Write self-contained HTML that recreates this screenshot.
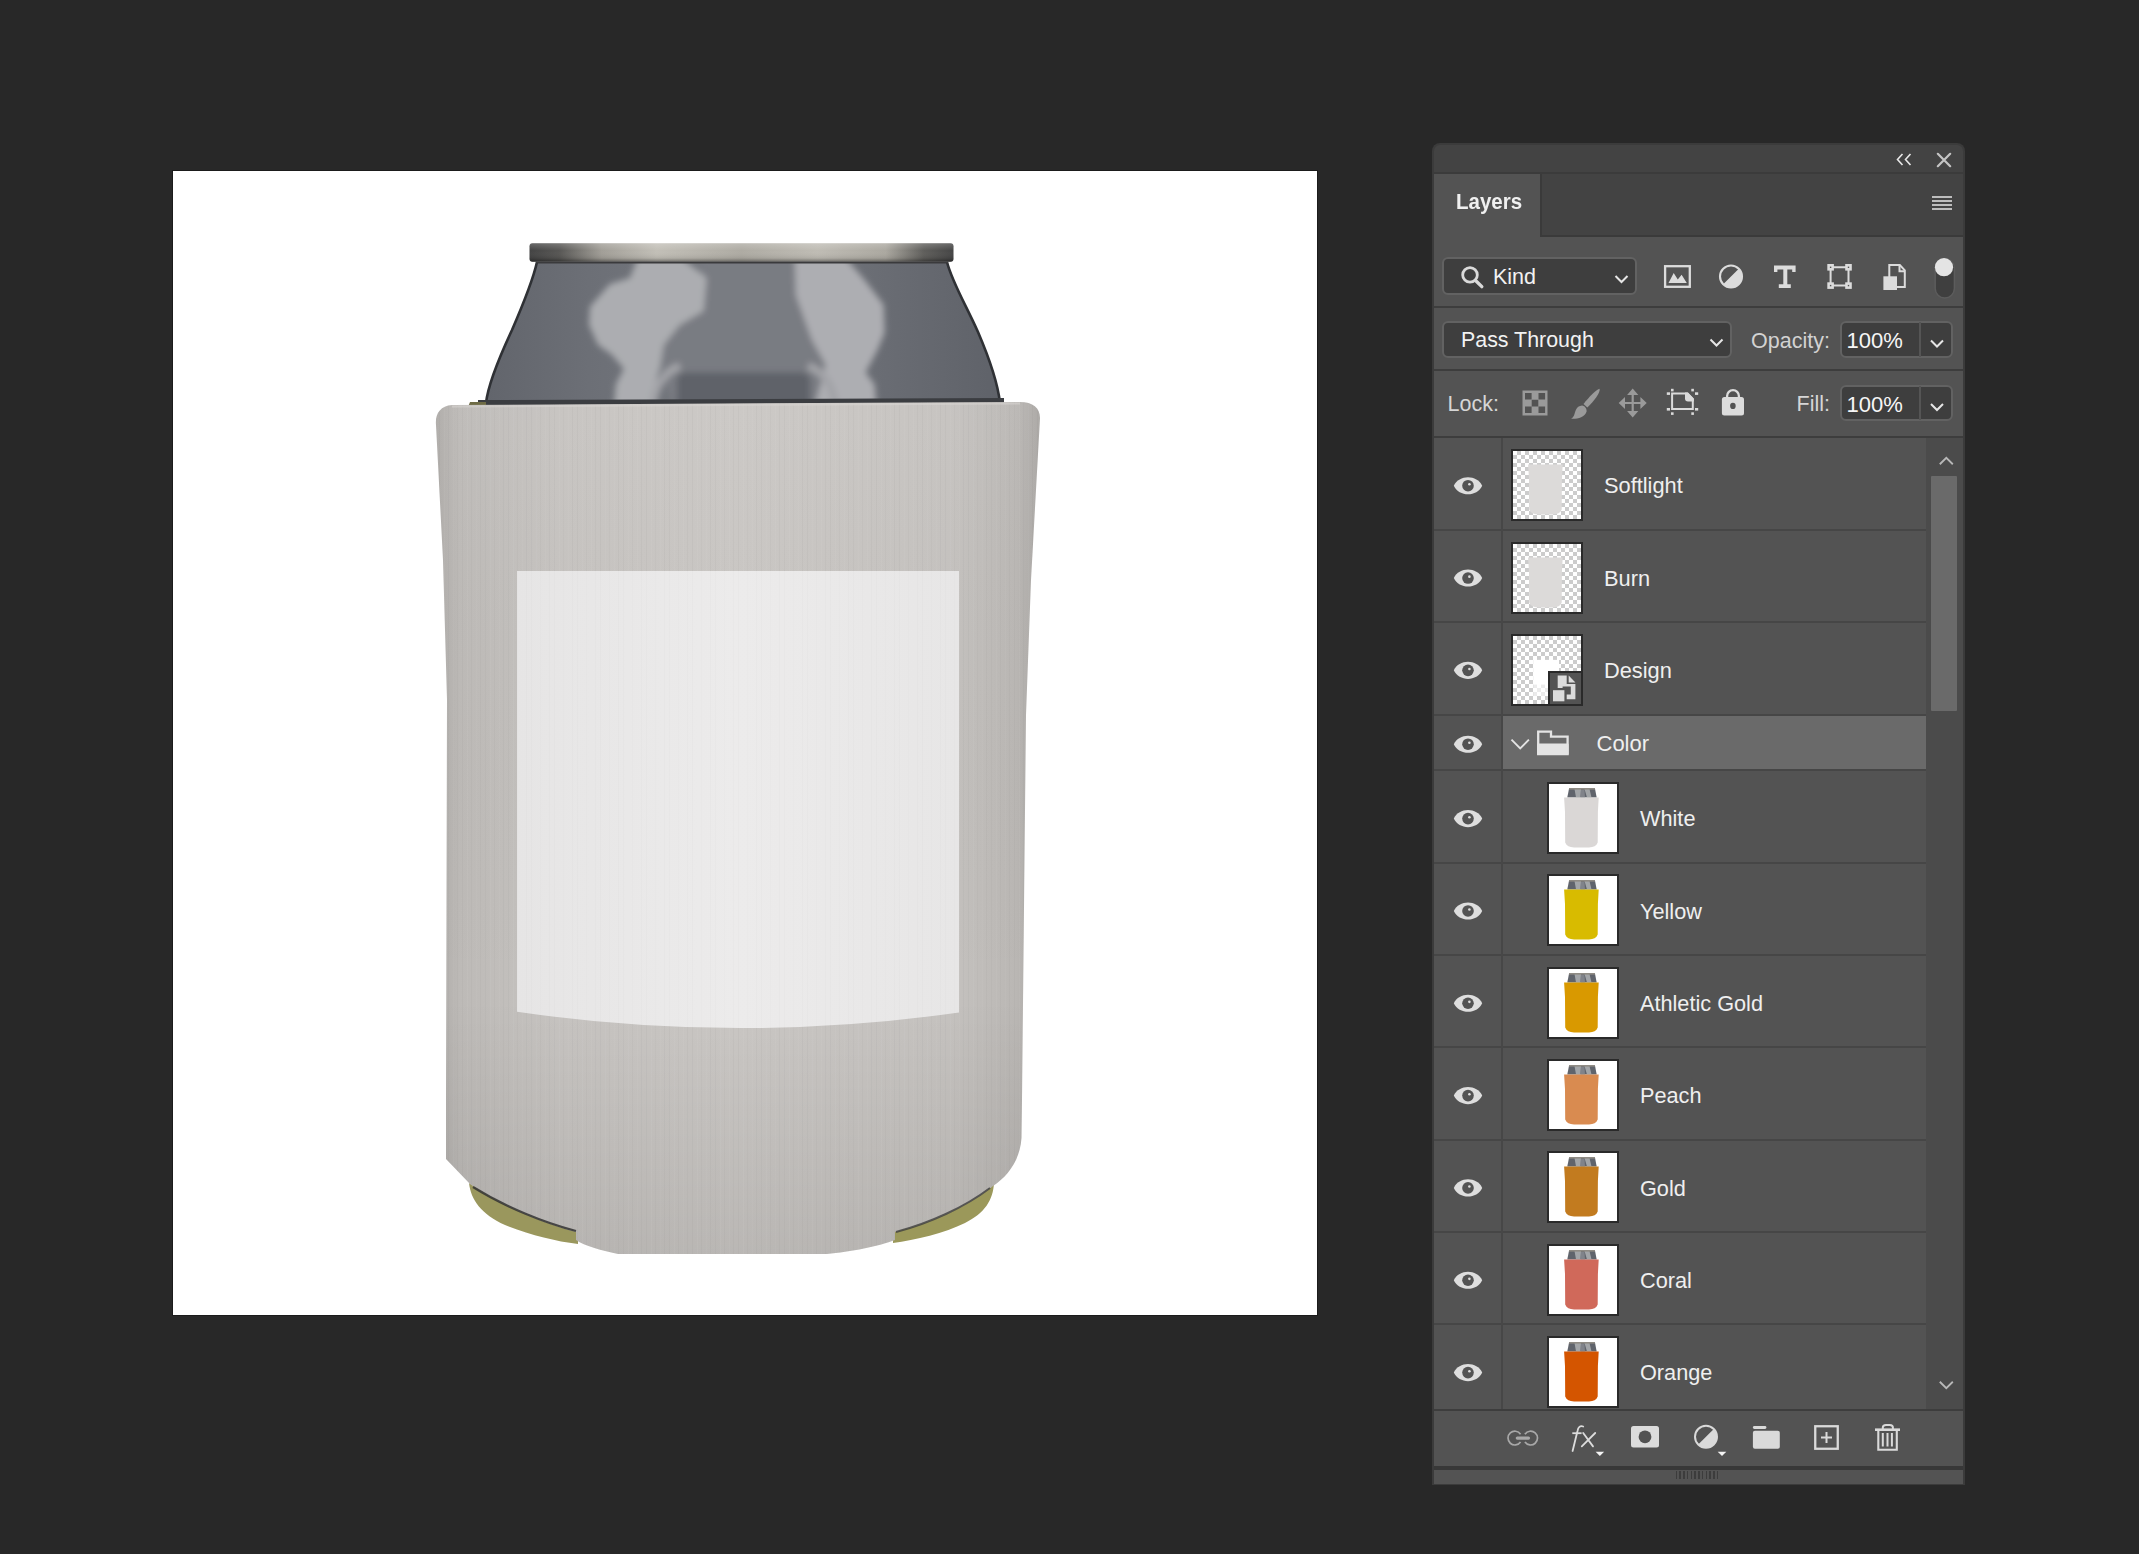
<!DOCTYPE html>
<html><head><meta charset="utf-8">
<style>
html,body{margin:0;padding:0;}
body{width:2139px;height:1554px;background:#282828;position:relative;overflow:hidden;font-family:"Liberation Sans",sans-serif;}
.a{position:absolute;}
.t{white-space:nowrap;line-height:1;}
.dd{background:#3e3e3e;border:2px solid #626262;border-radius:6px;box-sizing:border-box;}
.th{box-sizing:border-box;border:2px solid #2a2a2a;width:72px;height:72px;background:#fff;overflow:hidden;}
.ck{background:repeating-conic-gradient(#cccccc 0 25%,#ffffff 0 50%) 0 0/8px 8px;}
</style></head><body>
<div class="a" style="left:172px;top:170px;width:1146px;height:1146px;background:#1b1b1b;"></div>
<div class="a" style="left:173px;top:171px;width:1144px;height:1144px;background:#ffffff;"></div>
<svg class="a" style="left:0;top:0" width="2139" height="1554" viewBox="0 0 2139 1554">
<defs>
<linearGradient id="rim" x1="0" x2="1" y1="0" y2="0">
<stop offset="0" stop-color="#434343"/><stop offset="0.07" stop-color="#575654"/><stop offset="0.17" stop-color="#a19e97"/><stop offset="0.3" stop-color="#c2bfb7"/>
<stop offset="0.5" stop-color="#aeaba3"/><stop offset="0.68" stop-color="#bfbcb4"/><stop offset="0.84" stop-color="#aba8a0"/><stop offset="0.93" stop-color="#5f5e5b"/><stop offset="1" stop-color="#454545"/>
</linearGradient>
<linearGradient id="rimv" x1="0" x2="0" y1="0" y2="1">
<stop offset="0" stop-color="#fff" stop-opacity="0.2"/><stop offset="0.4" stop-color="#fff" stop-opacity="0"/><stop offset="0.8" stop-color="#000" stop-opacity="0.08"/><stop offset="1" stop-color="#000" stop-opacity="0.4"/>
</linearGradient>
<linearGradient id="canbase" x1="0" x2="1" y1="0" y2="0">
<stop offset="0" stop-color="#62656c"/><stop offset="0.2" stop-color="#6c6f76"/><stop offset="0.5" stop-color="#777a80"/><stop offset="0.8" stop-color="#686b72"/><stop offset="1" stop-color="#5f6269"/>
</linearGradient>
<linearGradient id="body" x1="0" x2="1" y1="0" y2="0">
<stop offset="0" stop-color="#aeaba8"/><stop offset="0.04" stop-color="#bdbab7"/><stop offset="0.2" stop-color="#c6c3c0"/><stop offset="0.5" stop-color="#cac7c4"/>
<stop offset="0.85" stop-color="#c5c2bf"/><stop offset="0.96" stop-color="#bab7b4"/><stop offset="1" stop-color="#aaa7a4"/>
</linearGradient>
<linearGradient id="bodyv" x1="0" x2="0" y1="0" y2="1">
<stop offset="0" stop-color="#fff" stop-opacity="0.04"/><stop offset="0.7" stop-color="#000" stop-opacity="0"/><stop offset="1" stop-color="#000" stop-opacity="0.08"/>
</linearGradient>
<linearGradient id="lab" x1="0" x2="1" y1="0" y2="0">
<stop offset="0" stop-color="#e6e5e5"/><stop offset="0.5" stop-color="#ecebeb"/><stop offset="1" stop-color="#e7e6e6"/>
</linearGradient>
<pattern id="stri" width="23" height="40" patternUnits="userSpaceOnUse">
<rect x="2" y="0" width="1" height="40" fill="#000" opacity="0.025"/><rect x="7" y="0" width="1" height="40" fill="#fff" opacity="0.04"/>
<rect x="11" y="0" width="1" height="40" fill="#000" opacity="0.02"/><rect x="16" y="0" width="1" height="40" fill="#fff" opacity="0.03"/><rect x="20" y="0" width="1" height="40" fill="#000" opacity="0.025"/>
</pattern>
<filter id="blur3"><feGaussianBlur stdDeviation="3"/></filter>
<filter id="blur1" x="-5%" y="-5%" width="110%" height="110%"><feGaussianBlur stdDeviation="3.2"/></filter>
<clipPath id="canclip"><path d="M537 262 C533 280 525 300 512 330 C498 360 488 385 486 403 L1000 403 C998 385 990 360 978 332 C966 305 952 282 947 262 Z"/></clipPath>
</defs>
<!-- can shoulder -->
<path d="M537 262 C533 280 525 300 512 330 C498 360 488 385 486 403 L1000 403 C998 385 990 360 978 332 C966 305 952 282 947 262 Z" fill="url(#canbase)"/>
<g clip-path="url(#canclip)">
<g filter="url(#blur1)">
<path d="M700 258 L795 258 L800 300 L812 340 L826 365 L814 410 L676 410 L660 369 L664 345 L680 325 L704 311 Z" fill="#797c82"/>
<path d="M637.8 258 L681.6 258 L706.6 278 L703.6 311 L679.6 325 L663.7 345 L659.7 369 L647.7 410 L613.8 410 L615.8 384.6 L623.8 368.7 L611.8 354.7 L597.9 344.7 L588.9 324.8 L589.9 306.8 L609.9 283.9 L629.8 277.9 Z" fill="#acadb1"/>
<path d="M794.8 258 L845.7 258 L864.6 280 L883.6 304.8 L884.6 332.8 L877.6 349.7 L865.6 372.6 L874.6 384.6 L876.6 410 L813.8 410 L825.7 364.7 L811.8 339.7 L795.8 294.9 Z" fill="#adaeb2"/>
<path d="M652 410 C654 390 662 372 680 366" fill="none" stroke="#a2a3a7" stroke-width="8"/>
<path d="M836 410 C834 390 826 372 808 366" fill="none" stroke="#a2a3a7" stroke-width="8"/>
<rect x="677" y="372.5" width="133" height="40" rx="8" fill="#5f6269"/>
</g>
</g>
<path d="M537 262 C533 280 525 300 512 330 C498 360 488 385 486 403" fill="none" stroke="#2f3135" stroke-width="2.6"/>
<path d="M947 262 C952 282 966 305 978 332 C990 360 998 385 1000 403" fill="none" stroke="#2f3135" stroke-width="2.6"/>
<!-- rim -->
<rect x="529.5" y="243.3" width="424" height="18.5" rx="3" fill="url(#rim)"/>
<rect x="529.5" y="243.3" width="424" height="18.5" rx="3" fill="url(#rimv)"/>
<path d="M536 262.5 H948" stroke="#3a3a3c" stroke-width="2"/>
<!-- dark gap under koozie top -->
<path d="M478 400 L1004 398 L1004 408 L478 410 Z" fill="#3b3d41"/>
<path d="M470 402 L486 402 L486 410 L466 412 Z" fill="#6e6b45"/>
<!-- olive bottoms -->
<path d="M469 1183 C471 1200 481 1214 505 1225 C530 1235 555 1241 578 1244 L578 1228 C545 1221 505 1205 469 1183 Z" fill="#9a975d"/>
<path d="M994 1183 C993 1200 985 1213 965 1223 C945 1233 915 1240 893 1243 L893 1228 C930 1220 965 1205 994 1183 Z" fill="#9b985a"/>
<!-- koozie body -->
<path id="kbody" d="M436 425 C435 414 440 406 452 405 L1020 402 C1033 402 1040 408 1040 418 L1031 580 L1026 715 L1022 1100 L1021.5 1138 C1020 1160 1008 1176 993 1186 C970 1205 935 1222 895 1232 L895 1240 C880 1246 850 1252 827 1254 L618 1254 C600 1250 585 1246 576 1240 L576 1232 C540 1222 500 1205 470 1184 L446 1159 L446 1100 L447 700 L443 560 Z" fill="url(#body)"/>
<path d="M436 425 C435 414 440 406 452 405 L1020 402 C1033 402 1040 408 1040 418 L1031 580 L1026 715 L1022 1100 L1021.5 1138 C1020 1160 1008 1176 993 1186 C970 1205 935 1222 895 1232 L895 1240 C880 1246 850 1252 827 1254 L618 1254 C600 1250 585 1246 576 1240 L576 1232 C540 1222 500 1205 470 1184 L446 1159 L446 1100 L447 700 L443 560 Z" fill="url(#bodyv)"/>
<path d="M436 425 C435 414 440 406 452 405 L1020 402 C1033 402 1040 408 1040 418 L1031 580 L1026 715 L1022 1100 L1021.5 1138 C1020 1160 1008 1176 993 1186 C970 1205 935 1222 895 1232 L895 1240 C880 1246 850 1252 827 1254 L618 1254 C600 1250 585 1246 576 1240 L576 1232 C540 1222 500 1205 470 1184 L446 1159 L446 1100 L447 700 L443 560 Z" fill="url(#stri)"/>
<path d="M452 406.5 L1020 403.5" stroke="#d8d5d2" stroke-width="2" opacity="0.6"/>
<path d="M473 1187 C505 1207 545 1223 576 1231" fill="none" stroke="#333" stroke-width="2.2" opacity="0.85"/>
<path d="M990 1188 C965 1207 930 1223 896 1232" fill="none" stroke="#3d3d3d" stroke-width="2" opacity="0.8"/>
<!-- label -->
<path d="M517 571 H959 V1012.5 Q738 1044 517 1011.8 Z" fill="url(#lab)"/>
<path d="M517 571 H959 V1012.5 Q738 1044 517 1011.8 Z" fill="url(#stri)" opacity="0.5"/>
</svg>
<div class="a" style="left:1432px;top:143px;width:533px;height:1342px;background:#3b3b3b;border-radius:8px 8px 0 0;"></div>
<div class="a" style="left:1434px;top:145px;width:529px;height:27px;background:#434343;border-radius:6px 6px 0 0;"></div>
<div class="a" style="left:1434px;top:174px;width:529px;height:63px;background:#434343;"></div>
<div class="a" style="left:1434px;top:174px;width:106px;height:63px;background:#535353;"></div>
<div class="a" style="left:1540px;top:174px;width:2px;height:63px;background:#3a3a3a;"></div>
<div class="a" style="left:1540px;top:235px;width:423px;height:2px;background:#3a3a3a;"></div>
<div class="a" style="left:1434px;top:237px;width:529px;height:1229px;background:#535353;"></div>
<div class="a" style="left:1434px;top:306px;width:529px;height:2px;background:#3d3d3d;"></div>
<div class="a" style="left:1434px;top:369px;width:529px;height:2px;background:#3d3d3d;"></div>
<div class="a" style="left:1434px;top:436px;width:529px;height:2px;background:#3d3d3d;"></div>
<div class="a" style="left:1926px;top:438px;width:37px;height:972px;background:#4b4b4b;"></div>
<div class="a" style="left:1434px;top:1409px;width:529px;height:2px;background:#3d3d3d;"></div>
<div class="a" style="left:1434px;top:1466px;width:529px;height:4px;background:#383838;"></div>
<div class="a" style="left:1434px;top:1470px;width:529px;height:14px;background:#535353;"></div>
<svg class="a" style="left:0;top:0" width="2139" height="1554" viewBox="0 0 2139 1554">
<path d="M1902.5 154 L1897.5 159.5 L1902.5 165 M1910.5 154 L1905.5 159.5 L1910.5 165" fill="none" stroke="#e8e8e8" stroke-width="1.6"/>
<path d="M1937.8 153.8 L1950.2 166.2 M1950.2 153.8 L1937.8 166.2" fill="none" stroke="#c4c4c4" stroke-width="2.2" stroke-linecap="round"/>
</svg>
<div class="a" style="left:1932px;top:196px;width:20px;height:2.2px;background:#bdbdbd;"></div>
<div class="a" style="left:1932px;top:200px;width:20px;height:2.2px;background:#bdbdbd;"></div>
<div class="a" style="left:1932px;top:204px;width:20px;height:2.2px;background:#bdbdbd;"></div>
<div class="a" style="left:1932px;top:208px;width:20px;height:2.2px;background:#bdbdbd;"></div>
<div class="a t" style="left:1455.5px;top:190.9px;font-size:22.3px;color:#f0f0f0;font-weight:bold;transform:scaleX(0.92);transform-origin:0 0;">Layers</div>
<div class="a dd" style="left:1442px;top:257px;width:195px;height:38px;"></div>
<svg class="a" style="left:0;top:0" width="2139" height="1554" viewBox="0 0 2139 1554">
<circle cx="1470" cy="274.9" r="7.3" fill="none" stroke="#dadada" stroke-width="2.8"/>
<path d="M1475.8 280.8 L1481.8 286.6" stroke="#dadada" stroke-width="3.4" stroke-linecap="round"/>
<rect x="1665.1" y="266.2" width="24.7" height="20.6" fill="none" stroke="#dcdcdc" stroke-width="2.3"/>
<path d="M1668.5 283 L1673.7 273 L1677.8 279.5 L1681.6 274.8 L1686.8 283 Z" fill="#dcdcdc"/>
<circle cx="1731" cy="276.5" r="11" fill="none" stroke="#dcdcdc" stroke-width="2.1"/>
<path d="M1738.8 268.7 A11 11 0 0 1 1723.2 284.3 Z" fill="#dcdcdc"/>
<path d="M1774 265.5 H1795.6 V272 H1792.2 V269.6 H1787.3 V284.2 H1790.8 V287.9 H1778.8 V284.2 H1783.3 V269.6 H1777.4 V272 H1774 Z" fill="#dcdcdc"/>
<path d="M1830.6 267.3 H1848.5 M1830.6 285.6 H1848.5 M1830.6 267.3 V285.6 M1848.5 267.3 V285.6" fill="none" stroke="#dcdcdc" stroke-width="2"/>
<rect x="1827.3" y="264" width="6.6" height="6.6" fill="#dcdcdc"/><rect x="1845.2" y="264" width="6.6" height="6.6" fill="#dcdcdc"/>
<rect x="1827.3" y="282.3" width="6.6" height="6.6" fill="#dcdcdc"/><rect x="1845.2" y="282.3" width="6.6" height="6.6" fill="#dcdcdc"/>
<rect x="1829.9" y="266.6" width="1.4" height="1.4" fill="#535353"/><rect x="1847.8" y="266.6" width="1.4" height="1.4" fill="#535353"/>
<rect x="1829.9" y="284.9" width="1.4" height="1.4" fill="#535353"/><rect x="1847.8" y="284.9" width="1.4" height="1.4" fill="#535353"/>
<path d="M1889.3 277 V265 H1899.8 L1904.8 270.3 V286.9 H1896" fill="none" stroke="#dcdcdc" stroke-width="2"/>
<path d="M1899.5 265 V271.2 H1905" fill="none" stroke="#dcdcdc" stroke-width="2"/>
<rect x="1883.4" y="276.3" width="13.6" height="13.7" fill="#dcdcdc"/>
<rect x="1935.2" y="258.5" width="19.2" height="39.5" rx="9.6" fill="#3f3f3f" stroke="#5c5c5c" stroke-width="1.5"/>
<circle cx="1944" cy="267.2" r="9.1" fill="#e4e4e4"/>
</svg>
<div class="a t" style="left:1493.0px;top:267.4px;font-size:21.5px;color:#f2f2f2;font-weight:normal;">Kind</div>
<div class="a dd" style="left:1442px;top:321px;width:290px;height:37px;"></div>
<div class="a t" style="left:1461.0px;top:330.1px;font-size:21.4px;color:#f2f2f2;font-weight:normal;">Pass Through</div>
<div class="a t" style="left:1751.0px;top:330.5px;font-size:21.5px;color:#d2d2d2;font-weight:normal;">Opacity:</div>
<div class="a dd" style="left:1840px;top:321px;width:113px;height:37px;"></div>
<div class="a" style="left:1919px;top:322px;width:2px;height:35px;background:#555555;"></div>
<div class="a t" style="left:1846.5px;top:330.1px;font-size:22px;color:#f6f6f6;font-weight:normal;">100%</div>
<div class="a t" style="left:1447.5px;top:394.0px;font-size:21.5px;color:#d6d6d6;font-weight:normal;">Lock:</div>
<div class="a t" style="left:1796.5px;top:394.0px;font-size:21.5px;color:#d6d6d6;font-weight:normal;">Fill:</div>
<div class="a dd" style="left:1840px;top:385px;width:113px;height:36px;"></div>
<div class="a" style="left:1919px;top:386px;width:2px;height:34px;background:#555555;"></div>
<div class="a t" style="left:1846.5px;top:393.6px;font-size:22px;color:#f6f6f6;font-weight:normal;">100%</div>
<svg class="a" style="left:0;top:0" width="2139" height="1554" viewBox="0 0 2139 1554">
<rect x="1522.5" y="390.5" width="25" height="25" fill="#9a9a9a"/>
<path d="M1525 393 h6.6 v6.6 h-6.6z M1538.5 393 h6.6 v6.6 h-6.6z M1531.7 399.8 h6.6 v6.6 h-6.6z M1525 406.5 h6.6 v6.6 h-6.6z M1538.5 406.5 h6.6 v6.6 h-6.6z" fill="#535353"/>
<path d="M1599.6 388.8 C1597 389 1589 397 1583.5 404 L1587.3 407.6 C1594 401 1600.5 393 1599.6 388.8 Z" fill="#9a9a9a"/>
<path d="M1582 405.5 C1576.5 406 1575.5 411 1574.5 414 C1573.8 416.5 1572.5 418.2 1570.8 418.8 C1577 419.2 1584.5 418 1586.6 411.5 C1587 409 1585 405.8 1582 405.5 Z" fill="#9a9a9a"/>
<path d="M1632.7 388.6 L1627.1 395 H1631.6 V401.9 H1625 V397 L1618.7 403 L1625 409 V404.1 H1631.6 V411 H1627.1 L1632.7 417.4 L1638.3 411 H1633.8 V404.1 H1640.4 V409 L1646.7 403 L1640.4 397 V401.9 H1633.8 V395 H1638.3 Z" fill="#9a9a9a"/>
<path d="M1672.1 393.6 H1687.3 L1692.8 399.1 V409.1 H1672.1 Z" fill="none" stroke="#dadada" stroke-width="2"/>
<path d="M1685 392.6 H1688 L1693.8 398.4 V401.4 H1688 C1686 401.4 1685 400.4 1685 398.4 Z" fill="#dadada"/>
<rect x="1671" y="388.8" width="2.6" height="2.6" fill="#dadada"/><rect x="1691.3" y="388.8" width="2.6" height="2.6" fill="#dadada"/>
<rect x="1671" y="412.3" width="2.6" height="2.6" fill="#dadada"/><rect x="1691.3" y="412.3" width="2.6" height="2.6" fill="#dadada"/>
<rect x="1666.8" y="392.3" width="3.2" height="2.6" fill="#dadada"/><rect x="1695" y="392.3" width="3.2" height="2.6" fill="#dadada"/>
<rect x="1666.8" y="408" width="3.2" height="2.6" fill="#dadada"/><rect x="1695" y="408" width="3.2" height="2.6" fill="#dadada"/>
<path d="M1727.1 398 V396 A5.9 5.9 0 0 1 1738.9 396 V398" fill="none" stroke="#dcdcdc" stroke-width="2.3"/>
<rect x="1721.9" y="397" width="22.1" height="18.5" rx="2.5" fill="#dcdcdc"/>
<ellipse cx="1732.9" cy="405.9" rx="2.8" ry="3.1" fill="#535353"/>
</svg>
<svg class="a" style="left:0;top:0" width="2139" height="1554" viewBox="0 0 2139 1554"><path d="M1615.5 276.0 L1621.5 282.0 L1627.5 276.0" fill="none" stroke="#e6e6e6" stroke-width="2"/><path d="M1710.5 339.5 L1716.5 345.5 L1722.5 339.5" fill="none" stroke="#e6e6e6" stroke-width="2"/><path d="M1931.0 340.5 L1937 346.5 L1943.0 340.5" fill="none" stroke="#e6e6e6" stroke-width="2"/><path d="M1931.0 404.0 L1937 410.0 L1943.0 404.0" fill="none" stroke="#e6e6e6" stroke-width="2"/></svg>
<div class="a" style="left:1434px;top:528.90px;width:492px;height:2px;background:#464646"></div>
<div class="a" style="left:1434px;top:621.23px;width:492px;height:2px;background:#464646"></div>
<div class="a" style="left:1434px;top:713.56px;width:492px;height:2px;background:#464646"></div>
<div class="a" style="left:1434px;top:768.90px;width:492px;height:2px;background:#464646"></div>
<div class="a" style="left:1434px;top:861.80px;width:492px;height:2px;background:#464646"></div>
<div class="a" style="left:1434px;top:954.13px;width:492px;height:2px;background:#464646"></div>
<div class="a" style="left:1434px;top:1046.46px;width:492px;height:2px;background:#464646"></div>
<div class="a" style="left:1434px;top:1138.79px;width:492px;height:2px;background:#464646"></div>
<div class="a" style="left:1434px;top:1231.12px;width:492px;height:2px;background:#464646"></div>
<div class="a" style="left:1434px;top:1323.45px;width:492px;height:2px;background:#464646"></div>
<div class="a" style="left:1501px;top:438px;width:2px;height:971px;background:#474747;"></div>
<div class="a" style="left:1503px;top:715.9px;width:423px;height:53px;background:#6a6a6a;"></div>
<svg class="a" style="left:0;top:0" width="2139" height="1554" viewBox="0 0 2139 1554"><path d="M1453.8 485.7 C1459 474.3 1477 474.3 1482.2 485.7 C1477 497.09999999999997 1459 497.09999999999997 1453.8 485.7 Z" fill="#dedede"/><circle cx="1468" cy="485.70" r="5.8" fill="#535353"/><circle cx="1469.4" cy="484.30" r="1.3" fill="#dedede"/><path d="M1453.8 578.03 C1459 566.63 1477 566.63 1482.2 578.03 C1477 589.43 1459 589.43 1453.8 578.03 Z" fill="#dedede"/><circle cx="1468" cy="578.03" r="5.8" fill="#535353"/><circle cx="1469.4" cy="576.63" r="1.3" fill="#dedede"/><path d="M1453.8 670.36 C1459 658.96 1477 658.96 1482.2 670.36 C1477 681.76 1459 681.76 1453.8 670.36 Z" fill="#dedede"/><circle cx="1468" cy="670.36" r="5.8" fill="#535353"/><circle cx="1469.4" cy="668.96" r="1.3" fill="#dedede"/><path d="M1453.8 744.2 C1459 732.8000000000001 1477 732.8000000000001 1482.2 744.2 C1477 755.6 1459 755.6 1453.8 744.2 Z" fill="#dedede"/><circle cx="1468" cy="744.20" r="5.8" fill="#535353"/><circle cx="1469.4" cy="742.80" r="1.3" fill="#dedede"/><path d="M1453.8 818.6 C1459 807.2 1477 807.2 1482.2 818.6 C1477 830.0 1459 830.0 1453.8 818.6 Z" fill="#dedede"/><circle cx="1468" cy="818.60" r="5.8" fill="#535353"/><circle cx="1469.4" cy="817.20" r="1.3" fill="#dedede"/><path d="M1453.8 910.9300000000001 C1459 899.5300000000001 1477 899.5300000000001 1482.2 910.9300000000001 C1477 922.33 1459 922.33 1453.8 910.9300000000001 Z" fill="#dedede"/><circle cx="1468" cy="910.93" r="5.8" fill="#535353"/><circle cx="1469.4" cy="909.53" r="1.3" fill="#dedede"/><path d="M1453.8 1003.26 C1459 991.86 1477 991.86 1482.2 1003.26 C1477 1014.66 1459 1014.66 1453.8 1003.26 Z" fill="#dedede"/><circle cx="1468" cy="1003.26" r="5.8" fill="#535353"/><circle cx="1469.4" cy="1001.86" r="1.3" fill="#dedede"/><path d="M1453.8 1095.5900000000001 C1459 1084.19 1477 1084.19 1482.2 1095.5900000000001 C1477 1106.9900000000002 1459 1106.9900000000002 1453.8 1095.5900000000001 Z" fill="#dedede"/><circle cx="1468" cy="1095.59" r="5.8" fill="#535353"/><circle cx="1469.4" cy="1094.19" r="1.3" fill="#dedede"/><path d="M1453.8 1187.92 C1459 1176.52 1477 1176.52 1482.2 1187.92 C1477 1199.3200000000002 1459 1199.3200000000002 1453.8 1187.92 Z" fill="#dedede"/><circle cx="1468" cy="1187.92" r="5.8" fill="#535353"/><circle cx="1469.4" cy="1186.52" r="1.3" fill="#dedede"/><path d="M1453.8 1280.25 C1459 1268.85 1477 1268.85 1482.2 1280.25 C1477 1291.65 1459 1291.65 1453.8 1280.25 Z" fill="#dedede"/><circle cx="1468" cy="1280.25" r="5.8" fill="#535353"/><circle cx="1469.4" cy="1278.85" r="1.3" fill="#dedede"/><path d="M1453.8 1372.58 C1459 1361.1799999999998 1477 1361.1799999999998 1482.2 1372.58 C1477 1383.98 1459 1383.98 1453.8 1372.58 Z" fill="#dedede"/><circle cx="1468" cy="1372.58" r="5.8" fill="#535353"/><circle cx="1469.4" cy="1371.18" r="1.3" fill="#dedede"/></svg>
<div class="a t" style="left:1604.0px;top:475.2px;font-size:21.8px;color:#efefef;font-weight:normal;">Softlight</div>
<div class="a t" style="left:1604.0px;top:567.6px;font-size:21.8px;color:#efefef;font-weight:normal;">Burn</div>
<div class="a t" style="left:1604.0px;top:659.9px;font-size:21.8px;color:#efefef;font-weight:normal;">Design</div>
<div class="a t" style="left:1596.5px;top:733.1px;font-size:22px;color:#efefef;font-weight:normal;">Color</div>
<div class="a t" style="left:1640.0px;top:808.1px;font-size:21.7px;color:#efefef;font-weight:normal;">White</div>
<div class="a t" style="left:1640.0px;top:900.5px;font-size:21.7px;color:#efefef;font-weight:normal;">Yellow</div>
<div class="a t" style="left:1640.0px;top:992.8px;font-size:21.7px;color:#efefef;font-weight:normal;">Athletic Gold</div>
<div class="a t" style="left:1640.0px;top:1085.1px;font-size:21.7px;color:#efefef;font-weight:normal;">Peach</div>
<div class="a t" style="left:1640.0px;top:1177.5px;font-size:21.7px;color:#efefef;font-weight:normal;">Gold</div>
<div class="a t" style="left:1640.0px;top:1269.8px;font-size:21.7px;color:#efefef;font-weight:normal;">Coral</div>
<div class="a t" style="left:1640.0px;top:1362.1px;font-size:21.7px;color:#efefef;font-weight:normal;">Orange</div>
<svg class="a" style="left:0;top:0" width="2139" height="1554" viewBox="0 0 2139 1554">
<path d="M1511.5 739.6 L1520.2 748.4 L1528.9 739.6" fill="none" stroke="#e4e4e4" stroke-width="1.9"/>
<path d="M1538.2 754 V731.6 H1551 V736.6 H1567.6 V754 Z" fill="none" stroke="#e4e4e4" stroke-width="2.3"/>
<rect x="1537" y="743.5" width="31.6" height="11.3" rx="1.2" fill="#e4e4e4"/>
</svg>
<div class="a th" style="left:1547px;top:782.10px;"><svg width="68" height="68" viewBox="0 0 68 68" style="display:block"><defs><linearGradient id="cg" x1="0" x2="1"><stop offset="0" stop-color="#5a5f67"/><stop offset="0.45" stop-color="#a7a9ad"/><stop offset="0.55" stop-color="#9c9ea3"/><stop offset="1" stop-color="#5a5f67"/></linearGradient></defs><path d="M20.1 4.3 H45.9 L47.7 13.4 H18.3 Z" fill="#60646c"/><path d="M25.5 5 L32 5 L31.5 13.4 L27 13.4 Z M35.5 5 L40.5 5 L42.5 13.4 L38 13.4 Z" fill="#aeb0b3" opacity="0.85"/><path d="M32 6 L35.5 6 L36 13.4 L31.5 13.4 Z" fill="#80838a"/><rect x="20" y="4" width="26" height="1.6" fill="#8f8b84"/><path d="M15.1 13.4 L49.7 13.4 L48.9 28 L48.7 58.6 C47.5 62 44.5 63.5 40 63.5 L25 63.5 C20.5 63.5 17.5 62 16.2 58.6 L16 28 Z" fill="#dad7d6"/></svg></div>
<div class="a th" style="left:1547px;top:874.43px;"><svg width="68" height="68" viewBox="0 0 68 68" style="display:block"><defs><linearGradient id="cg" x1="0" x2="1"><stop offset="0" stop-color="#5a5f67"/><stop offset="0.45" stop-color="#a7a9ad"/><stop offset="0.55" stop-color="#9c9ea3"/><stop offset="1" stop-color="#5a5f67"/></linearGradient></defs><path d="M20.1 4.3 H45.9 L47.7 13.4 H18.3 Z" fill="#60646c"/><path d="M25.5 5 L32 5 L31.5 13.4 L27 13.4 Z M35.5 5 L40.5 5 L42.5 13.4 L38 13.4 Z" fill="#aeb0b3" opacity="0.85"/><path d="M32 6 L35.5 6 L36 13.4 L31.5 13.4 Z" fill="#80838a"/><rect x="20" y="4" width="26" height="1.6" fill="#8f8b84"/><path d="M15.1 13.4 L49.7 13.4 L48.9 28 L48.7 58.6 C47.5 62 44.5 63.5 40 63.5 L25 63.5 C20.5 63.5 17.5 62 16.2 58.6 L16 28 Z" fill="#d8bb00"/></svg></div>
<div class="a th" style="left:1547px;top:966.76px;"><svg width="68" height="68" viewBox="0 0 68 68" style="display:block"><defs><linearGradient id="cg" x1="0" x2="1"><stop offset="0" stop-color="#5a5f67"/><stop offset="0.45" stop-color="#a7a9ad"/><stop offset="0.55" stop-color="#9c9ea3"/><stop offset="1" stop-color="#5a5f67"/></linearGradient></defs><path d="M20.1 4.3 H45.9 L47.7 13.4 H18.3 Z" fill="#60646c"/><path d="M25.5 5 L32 5 L31.5 13.4 L27 13.4 Z M35.5 5 L40.5 5 L42.5 13.4 L38 13.4 Z" fill="#aeb0b3" opacity="0.85"/><path d="M32 6 L35.5 6 L36 13.4 L31.5 13.4 Z" fill="#80838a"/><rect x="20" y="4" width="26" height="1.6" fill="#8f8b84"/><path d="M15.1 13.4 L49.7 13.4 L48.9 28 L48.7 58.6 C47.5 62 44.5 63.5 40 63.5 L25 63.5 C20.5 63.5 17.5 62 16.2 58.6 L16 28 Z" fill="#d99900"/></svg></div>
<div class="a th" style="left:1547px;top:1059.09px;"><svg width="68" height="68" viewBox="0 0 68 68" style="display:block"><defs><linearGradient id="cg" x1="0" x2="1"><stop offset="0" stop-color="#5a5f67"/><stop offset="0.45" stop-color="#a7a9ad"/><stop offset="0.55" stop-color="#9c9ea3"/><stop offset="1" stop-color="#5a5f67"/></linearGradient></defs><path d="M20.1 4.3 H45.9 L47.7 13.4 H18.3 Z" fill="#60646c"/><path d="M25.5 5 L32 5 L31.5 13.4 L27 13.4 Z M35.5 5 L40.5 5 L42.5 13.4 L38 13.4 Z" fill="#aeb0b3" opacity="0.85"/><path d="M32 6 L35.5 6 L36 13.4 L31.5 13.4 Z" fill="#80838a"/><rect x="20" y="4" width="26" height="1.6" fill="#8f8b84"/><path d="M15.1 13.4 L49.7 13.4 L48.9 28 L48.7 58.6 C47.5 62 44.5 63.5 40 63.5 L25 63.5 C20.5 63.5 17.5 62 16.2 58.6 L16 28 Z" fill="#d98b50"/></svg></div>
<div class="a th" style="left:1547px;top:1151.42px;"><svg width="68" height="68" viewBox="0 0 68 68" style="display:block"><defs><linearGradient id="cg" x1="0" x2="1"><stop offset="0" stop-color="#5a5f67"/><stop offset="0.45" stop-color="#a7a9ad"/><stop offset="0.55" stop-color="#9c9ea3"/><stop offset="1" stop-color="#5a5f67"/></linearGradient></defs><path d="M20.1 4.3 H45.9 L47.7 13.4 H18.3 Z" fill="#60646c"/><path d="M25.5 5 L32 5 L31.5 13.4 L27 13.4 Z M35.5 5 L40.5 5 L42.5 13.4 L38 13.4 Z" fill="#aeb0b3" opacity="0.85"/><path d="M32 6 L35.5 6 L36 13.4 L31.5 13.4 Z" fill="#80838a"/><rect x="20" y="4" width="26" height="1.6" fill="#8f8b84"/><path d="M15.1 13.4 L49.7 13.4 L48.9 28 L48.7 58.6 C47.5 62 44.5 63.5 40 63.5 L25 63.5 C20.5 63.5 17.5 62 16.2 58.6 L16 28 Z" fill="#c27b1f"/></svg></div>
<div class="a th" style="left:1547px;top:1243.75px;"><svg width="68" height="68" viewBox="0 0 68 68" style="display:block"><defs><linearGradient id="cg" x1="0" x2="1"><stop offset="0" stop-color="#5a5f67"/><stop offset="0.45" stop-color="#a7a9ad"/><stop offset="0.55" stop-color="#9c9ea3"/><stop offset="1" stop-color="#5a5f67"/></linearGradient></defs><path d="M20.1 4.3 H45.9 L47.7 13.4 H18.3 Z" fill="#60646c"/><path d="M25.5 5 L32 5 L31.5 13.4 L27 13.4 Z M35.5 5 L40.5 5 L42.5 13.4 L38 13.4 Z" fill="#aeb0b3" opacity="0.85"/><path d="M32 6 L35.5 6 L36 13.4 L31.5 13.4 Z" fill="#80838a"/><rect x="20" y="4" width="26" height="1.6" fill="#8f8b84"/><path d="M15.1 13.4 L49.7 13.4 L48.9 28 L48.7 58.6 C47.5 62 44.5 63.5 40 63.5 L25 63.5 C20.5 63.5 17.5 62 16.2 58.6 L16 28 Z" fill="#d0695a"/></svg></div>
<div class="a th" style="left:1547px;top:1336.08px;"><svg width="68" height="68" viewBox="0 0 68 68" style="display:block"><defs><linearGradient id="cg" x1="0" x2="1"><stop offset="0" stop-color="#5a5f67"/><stop offset="0.45" stop-color="#a7a9ad"/><stop offset="0.55" stop-color="#9c9ea3"/><stop offset="1" stop-color="#5a5f67"/></linearGradient></defs><path d="M20.1 4.3 H45.9 L47.7 13.4 H18.3 Z" fill="#60646c"/><path d="M25.5 5 L32 5 L31.5 13.4 L27 13.4 Z M35.5 5 L40.5 5 L42.5 13.4 L38 13.4 Z" fill="#aeb0b3" opacity="0.85"/><path d="M32 6 L35.5 6 L36 13.4 L31.5 13.4 Z" fill="#80838a"/><rect x="20" y="4" width="26" height="1.6" fill="#8f8b84"/><path d="M15.1 13.4 L49.7 13.4 L48.9 28 L48.7 58.6 C47.5 62 44.5 63.5 40 63.5 L25 63.5 C20.5 63.5 17.5 62 16.2 58.6 L16 28 Z" fill="#d45500"/></svg></div>
<div class="a th" style="left:1511px;top:449.20px;"><div class="ck" style="position:absolute;left:0;top:0;width:68px;height:68px"></div><svg style="position:absolute;left:0;top:0" width="68" height="68" viewBox="0 0 68 68"><path d="M15.1 13.4 L49.7 13.4 L48.9 28 L48.7 58.6 C47.5 62 44.5 63.5 40 63.5 L25 63.5 C20.5 63.5 17.5 62 16.2 58.6 L16 28 Z" fill="#dcdad9"/></svg></div>
<div class="a th" style="left:1511px;top:541.53px;"><div class="ck" style="position:absolute;left:0;top:0;width:68px;height:68px"></div><svg style="position:absolute;left:0;top:0" width="68" height="68" viewBox="0 0 68 68"><path d="M15.1 13.4 L49.7 13.4 L48.9 28 L48.7 58.6 C47.5 62 44.5 63.5 40 63.5 L25 63.5 C20.5 63.5 17.5 62 16.2 58.6 L16 28 Z" fill="#dcdad9"/></svg></div>
<div class="a th" style="left:1511px;top:633.86px;"><div class="ck" style="position:absolute;left:0;top:0;width:68px;height:68px"></div><svg style="position:absolute;left:0;top:0" width="68" height="68" viewBox="0 0 68 68"><rect x="20.2" y="23.9" width="25.8" height="24.7" fill="#ffffff"/><rect x="20.2" y="48" width="15" height="12" fill="#ffffff" opacity="0.6"/></svg><div style="position:absolute;left:35px;top:35.5px;width:35px;height:35px;background:#535353;border:2px solid #2a2a2a;box-sizing:border-box"></div><svg style="position:absolute;left:37px;top:37.5px" width="31" height="31" viewBox="0 0 31 31"><path d="M7.7 2.6 H16.7 V11.1 H25.4 V26.3 H16.7 V21.6 H20.8 V13.6 H12.6 V14.9 H7.7 Z" fill="#dcdcdc"/><path d="M18.7 2.6 L25.4 9.5 H18.7 Z" fill="#dcdcdc"/><rect x="3" y="17.2" width="11.4" height="11.1" fill="#dcdcdc"/></svg></div>
<div class="a" style="left:1931px;top:476.3px;width:26px;height:234.3px;background:#6a6a6a;border-radius:1px;"></div>
<svg class="a" style="left:0;top:0" width="2139" height="1554" viewBox="0 0 2139 1554"><path d="M1939.8 464.25 L1946.3 457.75 L1952.8 464.25" fill="none" stroke="#b8b8b8" stroke-width="1.8"/><path d="M1939.8 1381.75 L1946.3 1388.25 L1952.8 1381.75" fill="none" stroke="#b8b8b8" stroke-width="1.8"/></svg>
<svg class="a" style="left:0;top:0" width="2139" height="1554" viewBox="0 0 2139 1554">
<path d="M1520.55 1434.14 A6.9 6.9 0 1 0 1520.55 1442.06" fill="none" stroke="#a8a8a8" stroke-width="1.7"/>
<path d="M1524.95 1434.14 A6.9 6.9 0 1 1 1524.95 1442.06" fill="none" stroke="#a8a8a8" stroke-width="1.7"/>
<rect x="1515.7" y="1436.5" width="14.4" height="3.2" rx="1.6" fill="#a8a8a8"/>
<path d="M1583.2 1426.5 C1580 1425.5 1578.2 1427 1577.5 1431 L1572.6 1451" fill="none" stroke="#dcdcdc" stroke-width="1.8" stroke-linecap="round"/>
<path d="M1572.3 1433.2 H1581.6" stroke="#dcdcdc" stroke-width="1.8"/>
<path d="M1583.2 1433 L1593 1446.4 M1595.2 1433 L1581.8 1446.4" stroke="#dcdcdc" stroke-width="1.8" stroke-linecap="round"/>
<path d="M1595.6 1451.8 H1604.1 L1599.85 1456.1 Z" fill="#f4f4f4"/>
<rect x="1631" y="1426.1" width="28" height="21.4" rx="2.5" fill="#dcdcdc"/>
<circle cx="1645" cy="1436.8" r="6.4" fill="#535353"/>
<circle cx="1706" cy="1436.8" r="11" fill="none" stroke="#dadada" stroke-width="2"/>
<path d="M1713.8 1429 A11 11 0 0 1 1698.2 1444.6 Z" fill="#dadada"/>
<path d="M1717.7 1451.7 H1726.3 L1722 1456.1 Z" fill="#f4f4f4"/>
<rect x="1752.9" y="1426" width="13.5" height="2.9" rx="1.4" fill="#dadada"/>
<rect x="1752.9" y="1430.7" width="26.9" height="18" rx="2" fill="#dadada"/>
<rect x="1815.25" y="1426.25" width="22.5" height="22.5" fill="none" stroke="#dadada" stroke-width="2.3"/>
<path d="M1826.5 1432 V1443 M1821 1437.5 H1832" stroke="#dadada" stroke-width="2"/>
<path d="M1875 1429.7 H1900" stroke="#dadada" stroke-width="2.6"/>
<path d="M1882.8 1429.5 V1427.5 C1882.8 1425.5 1884 1424.9 1886 1424.9 H1889.8 C1891.8 1424.9 1892.9 1425.5 1892.9 1427.5 V1429.5" fill="none" stroke="#dadada" stroke-width="2"/>
<path d="M1878.3 1430 V1449.8 H1896.8 V1430" fill="none" stroke="#dadada" stroke-width="2.1"/>
<path d="M1882.8 1433 V1446.5 M1887.5 1433 V1446.5 M1891.9 1433 V1446.5" stroke="#dadada" stroke-width="2"/>
</svg>
<div class="a" style="left:1675.5px;top:1471px;width:1.6px;height:8px;background:#3c3c3c;"></div>
<div class="a" style="left:1679.25px;top:1471px;width:1.6px;height:8px;background:#3c3c3c;"></div>
<div class="a" style="left:1683.0px;top:1471px;width:1.6px;height:8px;background:#3c3c3c;"></div>
<div class="a" style="left:1686.75px;top:1471px;width:1.6px;height:8px;background:#3c3c3c;"></div>
<div class="a" style="left:1690.5px;top:1471px;width:1.6px;height:8px;background:#3c3c3c;"></div>
<div class="a" style="left:1694.25px;top:1471px;width:1.6px;height:8px;background:#3c3c3c;"></div>
<div class="a" style="left:1698.0px;top:1471px;width:1.6px;height:8px;background:#3c3c3c;"></div>
<div class="a" style="left:1701.75px;top:1471px;width:1.6px;height:8px;background:#3c3c3c;"></div>
<div class="a" style="left:1705.5px;top:1471px;width:1.6px;height:8px;background:#3c3c3c;"></div>
<div class="a" style="left:1709.25px;top:1471px;width:1.6px;height:8px;background:#3c3c3c;"></div>
<div class="a" style="left:1713.0px;top:1471px;width:1.6px;height:8px;background:#3c3c3c;"></div>
<div class="a" style="left:1716.75px;top:1471px;width:1.6px;height:8px;background:#3c3c3c;"></div>
</body></html>
